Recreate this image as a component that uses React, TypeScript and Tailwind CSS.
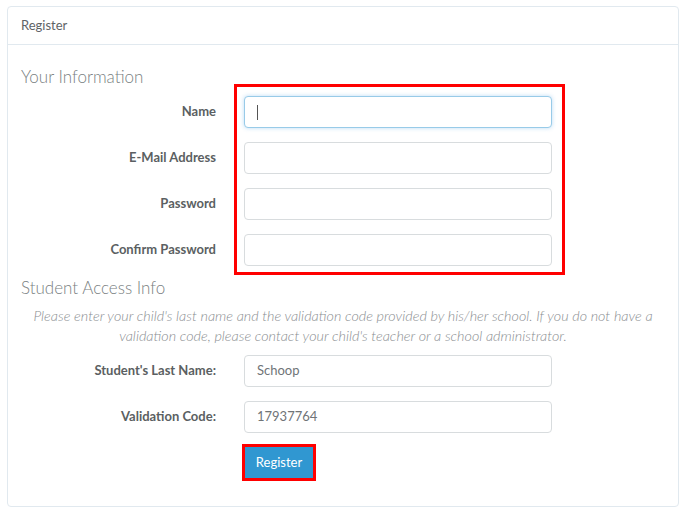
import React from 'react';

const fieldRows = ['Name', 'E-Mail Address', 'Password', 'Confirm Password'];

const Field: React.FC<{ label: string; value?: string; focused?: boolean }> = ({ label, value, focused }) => (
  <div className="flex items-center h-8 mb-[14px]">
    <label className="w-[195px] shrink-0 text-right text-[13px] font-bold text-[#5b5f62]">{label}</label>
    <div
      className={`ml-[28px] w-[308px] h-8 rounded-[4px] border bg-white flex items-center px-3 text-[13px] text-[#707477] ${
        focused ? 'border-[#98cbe8] shadow-[0_0_4px_rgba(102,175,233,0.45)]' : 'border-[#d8dcde]'
      }`}
    >
      {focused && <span className="w-px h-[15px] bg-[#555]" />}
      {value}
    </div>
  </div>
);

const App: React.FC = () => {
  return (
    <div className="w-[685px] h-[510px] bg-white pt-[6px] pl-[7px]" style={{ fontFamily: 'Lato, "Open Sans", sans-serif' }}>
      <div className="relative w-[672px] h-[501px] border border-[#e1e9ef] rounded-[4px] bg-white">
        <div className="h-[38px] border-b border-[#e1e9ef] flex items-center px-[13px] text-[13px] text-[#5e6366]">
          Register
        </div>

        <div className="px-[13px] pt-[22px]">
          <div className="text-[17px] leading-5 text-[#7a7f82] font-light">Your Information</div>
          <div className="mt-[9px]">
            {fieldRows.map((r, i) => (
              <Field key={r} label={r} focused={i === 0} />
            ))}
          </div>

          <div className="-mt-[2px] text-[17px] leading-5 text-[#7a7f82] font-light">Student Access Info</div>
          <p className="mt-2 text-center italic font-light text-[14.4px] leading-5 text-[#8a8e91]">
            Please enter your child's last name and the validation code provided by his/her school. If you do not have a
            <br />
            validation code, please contact your child's teacher or a school administrator.
          </p>

          <div className="mt-[9px]">
            <Field label="Student's Last Name:" value="Schoop" />
            <Field label="Validation Code:" value="17937764" />
          </div>

          <div className="-mt-[3px] ml-[221px] inline-flex border-[3px] border-[#ff0000]">
            <button className="h-[31px] w-[68px] bg-[#3097d1] text-white text-[13px]">Register</button>
          </div>
        </div>

        <div className="absolute left-[226px] top-[77px] w-[331px] h-[191px] border-[3px] border-[#ff0000] pointer-events-none" />
      </div>
    </div>
  );
};

export default App;
